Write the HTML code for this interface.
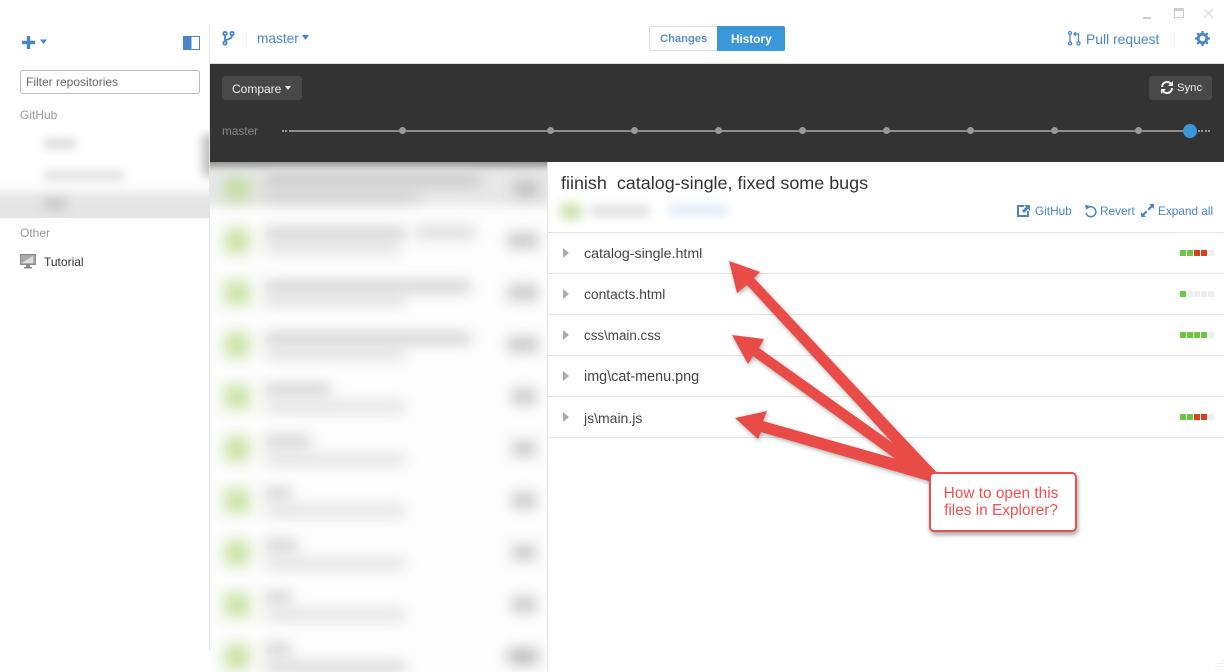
<!DOCTYPE html>
<html><head><meta charset="utf-8"><style>
html,body{margin:0;padding:0;background:#fff}
#p{position:relative;width:1224px;height:672px;overflow:hidden;background:#fff;font-family:"Liberation Sans",sans-serif}
.t{position:absolute;white-space:nowrap;line-height:16px}
.b{position:absolute;filter:blur(7px)}
.gr{background:#cde2a6}
.h1{background:#c4c4c4;height:9px}
.h2{background:#d6d6d6;height:8px}
.h3{background:#c6c6c6;height:15px}
.l{position:absolute;left:548px;right:0;height:1px;background:#e4e4e4}
.d{position:absolute;width:6px;height:6px}
.g{background:#6cc644}.r{background:#d9411e}.n{background:#eee}
.a{position:absolute;left:563px;width:0;height:0;border-left:6px solid #aaa;border-top:5px solid transparent;border-bottom:5px solid transparent}
.f{color:#444;left:584px}
.k{font-size:11.800px;color:#4a86c5;top:203px}
.dot{position:absolute;top:127px;width:7px;height:7px;border-radius:50%;background:#999}
</style></head><body><div id="p">

<!-- blurred sidebar -->
<div style="position:absolute;left:0;top:130px;width:209px;height:88px;overflow:hidden">
<div class="b" style="left:-20px;top:62px;width:250px;height:46px;background:#e4e4e4;filter:blur(6px)"></div>
<div class="b" style="left:203px;top:4px;width:30px;height:42px;background:#bbb;filter:blur(5px)"></div>
<div class="b" style="left:44px;top:9px;width:32px;height:9px;background:#d6d6d6;filter:blur(5px)"></div>
<div class="b" style="left:44px;top:41px;width:80px;height:9px;background:#dcdcdc;filter:blur(5px)"></div>
<div class="b" style="left:44px;top:69px;width:22px;height:9px;background:#c4c4c4;filter:blur(5px)"></div>
</div>
<div style="position:absolute;left:209px;top:24px;width:1px;height:626px;background:#e6e6e6"></div>

<!-- blurred list -->
<div style="position:absolute;left:210px;top:162px;width:337px;height:510px;overflow:hidden;background:#fdfdfd">
<div class="b" style="left:-12px;top:-12px;width:361px;height:56px;background:#e8e8e8;filter:blur(5px)"></div>
<div class="b" style="left:-12px;top:-8px;width:361px;height:12px;background:#888;filter:blur(4px)"></div>
<div class="b gr" style="left:14px;top:15px;width:26px;height:24px;background:#c6dca2"></div>
<div class="b" style="left:55px;top:12px;width:215px;height:12px;background:#c8c8c8"></div>
<div class="b" style="left:55px;top:29px;width:150px;height:10px;background:#cecece"></div>
<div class="b h3" style="left:304px;top:19px;width:24px;background:#bcbcbc"></div>

<div class="b gr" style="left:14px;top:67px;width:26px;height:24px"></div>
<div class="b h1" style="left:55px;top:67px;width:140px"></div>
<div class="b h1" style="left:205px;top:66px;width:60px;background:#d0d0d0"></div>
<div class="b h2" style="left:55px;top:82px;width:135px"></div>
<div class="b h3" style="left:298px;top:71px;width:30px"></div>

<div class="b gr" style="left:14px;top:119px;width:26px;height:24px"></div>
<div class="b h1" style="left:55px;top:120px;width:205px"></div>
<div class="b h2" style="left:55px;top:135px;width:140px"></div>
<div class="b h3" style="left:298px;top:123px;width:30px"></div>

<div class="b gr" style="left:14px;top:171px;width:26px;height:24px"></div>
<div class="b h1" style="left:55px;top:172px;width:205px"></div>
<div class="b h2" style="left:55px;top:188px;width:140px"></div>
<div class="b h3" style="left:298px;top:175px;width:30px"></div>

<div class="b gr" style="left:14px;top:223px;width:26px;height:24px"></div>
<div class="b h1" style="left:55px;top:223px;width:65px"></div>
<div class="b h2" style="left:55px;top:241px;width:140px"></div>
<div class="b h3" style="left:302px;top:227px;width:24px"></div>

<div class="b gr" style="left:14px;top:275px;width:26px;height:24px"></div>
<div class="b h1" style="left:55px;top:275px;width:45px"></div>
<div class="b h2" style="left:55px;top:293px;width:140px"></div>
<div class="b h3" style="left:302px;top:279px;width:24px"></div>

<div class="b gr" style="left:14px;top:327px;width:26px;height:24px"></div>
<div class="b h1" style="left:55px;top:327px;width:26px"></div>
<div class="b h2" style="left:55px;top:345px;width:140px"></div>
<div class="b h3" style="left:302px;top:331px;width:24px"></div>

<div class="b gr" style="left:14px;top:379px;width:26px;height:24px"></div>
<div class="b h1" style="left:55px;top:379px;width:32px"></div>
<div class="b h2" style="left:55px;top:397px;width:140px"></div>
<div class="b h3" style="left:302px;top:383px;width:24px"></div>

<div class="b gr" style="left:14px;top:431px;width:26px;height:24px"></div>
<div class="b h1" style="left:55px;top:431px;width:26px"></div>
<div class="b h2" style="left:55px;top:449px;width:140px"></div>
<div class="b h3" style="left:302px;top:435px;width:24px"></div>

<div class="b gr" style="left:14px;top:483px;width:26px;height:24px"></div>
<div class="b h1" style="left:55px;top:483px;width:26px"></div>
<div class="b h2" style="left:55px;top:501px;width:140px;background:#c8c8c8"></div>
<div class="b h3" style="left:298px;top:487px;width:30px;background:#b8b8b8"></div>
</div>
<div style="position:absolute;left:547px;top:162px;width:1px;height:510px;background:#e6e6e6"></div>

<!-- top toolbar -->
<div style="position:absolute;left:1143px;top:17px;width:8px;height:2px;background:#ccc"></div>
<div style="position:absolute;left:1174px;top:8px;width:8px;height:6px;border:1px solid #ccc;border-top-width:3px"></div>
<svg style="position:absolute;left:1203px;top:8px" width="11" height="11"><path d="M1 1L10 10M10 1L1 10" stroke="#e2e2e2" stroke-width="1.600"/></svg>

<svg style="position:absolute;left:20px;top:34px" width="30" height="16"><path d="M2 8.500H15M8.500 2V15" stroke="#4a86c5" stroke-width="3.400"/><path d="M20 5.500H27L23.500 10Z" fill="#4a86c5"/></svg>
<div style="position:absolute;left:183px;top:36px;width:15px;height:12px;border:1px solid #4a86c5;background:linear-gradient(90deg,#4a86c5 50%,#fff 50%)"></div>
<div style="position:absolute;left:20px;top:70px;width:178px;height:22px;border:1px solid #bbb;border-radius:3px"></div>
<div class="t" style="left:26px;top:74px;font-size:12px;color:#666">Filter repositories</div>
<div class="t" style="left:20px;top:107px;font-size:12px;color:#999">GitHub</div>
<div class="t" style="left:20px;top:225px;font-size:12px;color:#999">Other</div>
<svg style="position:absolute;left:20px;top:254px" width="16" height="15"><rect x="0.500" y="0.500" width="15" height="10" fill="#aaa" stroke="#888"/><path d="M2 9L13 2V9Z" fill="#ddd"/><rect x="6" y="11" width="4" height="2" fill="#888"/><rect x="4" y="13" width="8" height="1.500" fill="#888"/></svg>
<div class="t" style="left:44px;top:254px;font-size:12px;color:#333">Tutorial</div>

<svg style="position:absolute;left:222px;top:30px" width="13" height="16" fill="none" stroke="#4a86c5" stroke-width="1.800"><circle cx="3" cy="3.500" r="1.700"/><circle cx="10" cy="3.500" r="1.700"/><circle cx="3" cy="13" r="1.700"/><path d="M3 5V11M3 10.500C6 9 10 9 10 5.500"/></svg>
<div style="position:absolute;left:246px;top:31px;width:1px;height:14px;background:#eee"></div>
<div class="t" style="left:257px;top:31px;font-size:13.700px;color:#4a86c5">master</div>
<svg style="position:absolute;left:302px;top:35px" width="8" height="6"><path d="M0 0H7L3.500 5Z" fill="#4a86c5"/></svg>

<div style="position:absolute;left:649px;top:26px;width:67px;height:23px;border:1px solid #ddd;border-right:0;border-radius:2px 0 0 2px"></div>
<div class="t" style="left:660px;top:31px;font-size:11.200px;font-weight:bold;color:#5b8fc7">Changes</div>
<div style="position:absolute;left:717px;top:26px;width:68px;height:25px;background:#3b97d9;border-radius:0 2px 2px 0"></div>
<div class="t" style="left:731px;top:31px;font-size:11.800px;font-weight:bold;color:#fff">History</div>

<svg style="position:absolute;left:1067px;top:30px" width="15" height="17" fill="none" stroke="#4a86c5" stroke-width="1.300"><circle cx="3" cy="13.500" r="1.500"/><circle cx="11.500" cy="13.500" r="1.500"/><circle cx="3" cy="3" r="1.500"/><path d="M3 4.500V12M11.500 12V4H7.500M9 2L7 4L9 6"/></svg>
<div class="t" style="left:1086px;top:31px;font-size:13.900px;color:#4a86c5">Pull request</div>
<div style="position:absolute;left:1174px;top:32px;width:1px;height:14px;background:#eee"></div>
<svg style="position:absolute;left:1195px;top:31px" width="15" height="15"><circle cx="7.500" cy="7.500" r="4.300" fill="none" stroke="#4a86c5" stroke-width="2.800"/><path d="M7.500 0V15M0 7.500H15M2.200 2.200L12.800 12.800M12.800 2.200L2.200 12.800" stroke="#4a86c5" stroke-width="2.200" stroke-dasharray="2.800 9.400 2.800"/></svg>

<!-- dark bar -->
<div style="position:absolute;left:210px;top:63px;right:0;height:1px;background:#ddd"></div>
<div style="position:absolute;left:210px;top:64px;right:0;height:98px;background:#333"></div>
<div style="position:absolute;left:222px;top:76px;width:80px;height:24px;background:#484848;border-radius:3px"></div>
<div class="t" style="left:232px;top:81px;font-size:12px;color:#f0f0f0">Compare</div>
<svg style="position:absolute;left:285px;top:86px" width="6" height="5"><path d="M0 0H6L3 4Z" fill="#eee"/></svg>
<div style="position:absolute;left:1149px;top:76px;width:63px;height:24px;background:#484848;border-radius:3px"></div>
<svg style="position:absolute;left:1160px;top:80px" width="14" height="15" fill="none" stroke="#f4f4f4" stroke-width="2"><path d="M2 7A5 5 0 0 1 11 4M12 8A5 5 0 0 1 3 11"/><path d="M13 1V6H8ZM1 14V9H6Z" fill="#f4f4f4" stroke="none"/></svg>
<div class="t" style="left:1177px;top:80px;font-size:11.300px;color:#eee">Sync</div>
<div class="t" style="left:222px;top:123px;font-size:11.800px;color:#8a8a8a">master</div>
<div style="position:absolute;left:282px;top:130px;width:9px;height:0;border-top:2px dotted #999"></div>
<div style="position:absolute;left:291px;top:130px;width:895px;height:2px;background:#8c8c8c"></div>
<div style="position:absolute;left:1198px;top:130px;width:12px;height:0;border-top:2px dotted #999"></div>
<div class="dot" style="left:398.500px"></div><div class="dot" style="left:546.500px"></div><div class="dot" style="left:630.500px"></div><div class="dot" style="left:714.500px"></div><div class="dot" style="left:798.500px"></div><div class="dot" style="left:882.500px"></div><div class="dot" style="left:966.500px"></div><div class="dot" style="left:1050.500px"></div><div class="dot" style="left:1134.500px"></div>
<div style="position:absolute;left:1183px;top:124px;width:14px;height:14px;border-radius:50%;background:#3b97d9"></div>

<!-- detail -->
<div class="t" style="left:561px;top:173px;font-size:17.950px;line-height:20px;color:#333;white-space:pre">fiinish  catalog-single, fixed some bugs</div>
<div style="position:absolute;left:548px;top:195px;width:200px;height:34px;overflow:hidden">
<div class="b" style="left:12px;top:8px;width:22px;height:17px;background:#d4e4b8;filter:blur(5px)"></div>
<div class="b" style="left:42px;top:11px;width:60px;height:10px;background:#dedede;filter:blur(5px)"></div>
<div class="b" style="left:120px;top:10px;width:60px;height:10px;background:#dfeaf6;filter:blur(5px)"></div>
</div>

<svg style="position:absolute;left:1017px;top:204px" width="13" height="13"><path d="M0 1H7V3H2V11H10V7H12V13H0Z" fill="#4a86c5"/><path d="M7 1H13V7L11 5L7 9L5 7L9 3Z" fill="#4a86c5"/></svg>
<div class="t k" style="left:1035px">GitHub</div>
<svg style="position:absolute;left:1084px;top:204px" width="13" height="14" fill="none" stroke="#4a86c5" stroke-width="1.500"><path d="M3 4.500A5 5 0 1 1 2 9"/><path d="M1 1L5 1.500L2 6Z" fill="#4a86c5" stroke="none"/></svg>
<div class="t k" style="left:1100px">Revert</div>
<svg style="position:absolute;left:1141px;top:204px" width="13" height="13"><path d="M8 0H13V5L11.200 3.300L8 6.500L6.500 5L9.700 1.800ZM0 13V8L1.800 9.700L5 6.500L6.500 8L3.300 11.200L5 13Z" fill="#4a86c5"/></svg>
<div class="t k" style="left:1158px">Expand all</div>

<div class="l" style="top:232px"></div><div class="l" style="top:273px"></div><div class="l" style="top:314px"></div><div class="l" style="top:355px"></div><div class="l" style="top:396px"></div><div class="l" style="top:437px"></div>

<div class="a" style="top:248px"></div><div class="t f" style="top:246px;font-size:14.200px">catalog-single.html</div>
<div class="a" style="top:289px"></div><div class="t f" style="top:287px;font-size:13.800px">contacts.html</div>
<div class="a" style="top:330px"></div><div class="t f" style="top:328px;font-size:13.400px">css\main.css</div>
<div class="a" style="top:371px"></div><div class="t f" style="top:369px;font-size:14.400px">img\cat-menu.png</div>
<div class="a" style="top:412px"></div><div class="t f" style="top:410px;font-size:14px">js\main.js</div>

<div class="d g" style="left:1180px;top:250px"></div><div class="d g" style="left:1187px;top:250px"></div><div class="d r" style="left:1194px;top:250px"></div><div class="d r" style="left:1201px;top:250px"></div><div class="d n" style="left:1208px;top:250px"></div>
<div class="d g" style="left:1180px;top:291px"></div><div class="d n" style="left:1187px;top:291px"></div><div class="d n" style="left:1194px;top:291px"></div><div class="d n" style="left:1201px;top:291px"></div><div class="d n" style="left:1208px;top:291px"></div>
<div class="d g" style="left:1180px;top:332px"></div><div class="d g" style="left:1187px;top:332px"></div><div class="d g" style="left:1194px;top:332px"></div><div class="d g" style="left:1201px;top:332px"></div><div class="d n" style="left:1208px;top:332px"></div>
<div class="d g" style="left:1180px;top:414px"></div><div class="d g" style="left:1187px;top:414px"></div><div class="d r" style="left:1194px;top:414px"></div><div class="d r" style="left:1201px;top:414px"></div><div class="d n" style="left:1208px;top:414px"></div>

<!-- arrows -->
<svg style="position:absolute;left:0;top:0;filter:drop-shadow(1px 2px 2px rgba(0,0,0,.3))" width="1224" height="672"><g fill="#e94b47">
<path d="M729 261L760 272L754 278L938 474L925 478L747 285L737 293Z"/>
<path d="M732 335L764 339L759 348L928 468L922 478L753 356L748 364Z"/>
<path d="M735 418L767 411L763 421L935 470L932 482L761 432L758 439Z"/>
</g></svg>
<div style="position:absolute;left:929px;top:472px;width:144px;height:56px;border:2px solid #e5534f;border-radius:5px;background:#fff;box-shadow:1px 3px 5px rgba(0,0,0,.35)"></div>
<div class="t" style="left:927px;width:148px;top:485px;text-align:center;font-size:15.400px;line-height:17px;color:#ee5050">How to open this<br>files in Explorer?</div>
<svg style="position:absolute;left:1214px;top:659px" width="9" height="9"><path d="M8 1V2M5 4V5M8 4V5M2 7V8M5 7V8M8 7V8" stroke="#ccc"/></svg>
</div></body></html>
